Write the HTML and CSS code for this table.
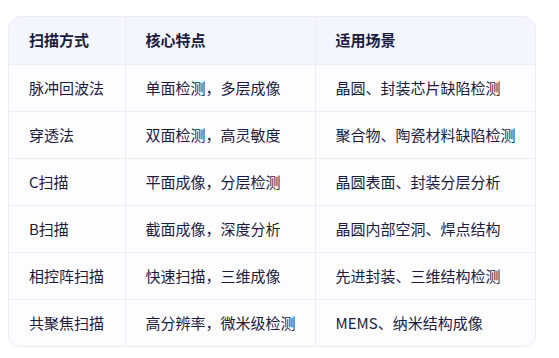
FILE: index.html
```html
<!DOCTYPE html>
<html lang="zh">
<head>
<meta charset="utf-8">
<link rel="stylesheet" href="styles.css">
</head>
<body>
<div class="wrap">
<table class="tbl">
<thead>
<tr><th class="c1">扫描方式</th><th class="c2">核心特点</th><th class="c3">适用场景</th></tr>
</thead>
<tbody>
<tr><td>脉冲回波法</td><td>单面检测，多层成像</td><td>晶圆、封装芯片缺陷检测</td></tr>
<tr><td>穿透法</td><td>双面检测，高灵敏度</td><td>聚合物、陶瓷材料缺陷检测</td></tr>
<tr><td>C扫描</td><td>平面成像，分层检测</td><td>晶圆表面、封装分层分析</td></tr>
<tr><td>B扫描</td><td>截面成像，深度分析</td><td>晶圆内部空洞、焊点结构</td></tr>
<tr><td>相控阵扫描</td><td>快速扫描，三维成像</td><td>先进封装、三维结构检测</td></tr>
<tr><td>共聚焦扫描</td><td>高分辨率，微米级检测</td><td>MEMS、纳米结构成像</td></tr>
</tbody>
</table>
</div>
</body>
</html>
```
FILE: styles.css
```css
html, body { margin: 0; padding: 0; background: #ffffff; }
body { padding: 16px 23px 0 8px; font-family: "Noto Sans CJK SC", "Noto Sans", sans-serif; color: #1c1b3d; }
.wrap {
  width: 528px;
  border: 1px solid #ececf4;
  border-radius: 12px;
  overflow: hidden;
  background: #fdfdff;
  box-sizing: border-box;
}
.tbl { width: 100%; border-collapse: collapse; font-size: 15px; }
.tbl th, .tbl td {
  text-align: left;
  padding: 0 0 0 20px;
  height: 47px;
  box-sizing: border-box;
  line-height: 20px;
  border-left: 1px solid #ececf4;
  border-top: 1px solid #ececf4;
}
.tbl th { background: #f3f6fe; font-weight: 700; border-top: none; }
.tbl th:first-child, .tbl td:first-child { border-left: none; }
.c1 { width: 116px; }
.c2 { width: 190px; }
```
